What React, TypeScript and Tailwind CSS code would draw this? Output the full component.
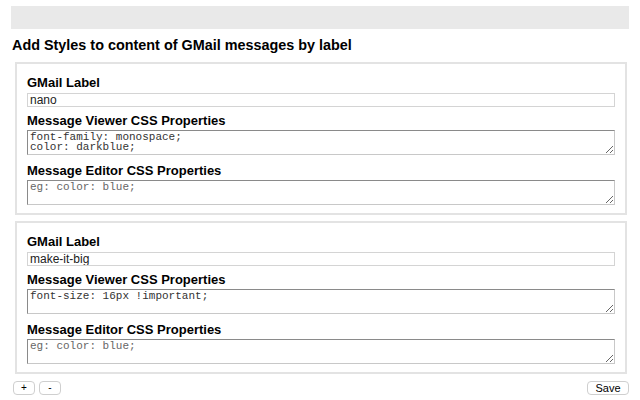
import { useState } from "react";

type Rule = { label: string; viewer: string; editor: string };

const initialRules: Rule[] = [
  { label: "nano", viewer: "font-family: monospace;\ncolor: darkblue;", editor: "" },
  { label: "make-it-big", viewer: "font-size: 16px !important;", editor: "" },
];

function RulePanel({ rule }: { rule: Rule }) {
  return (
    <div className="mt-[6px] first:mt-0 border-2 border-[#e3e3e3] px-[10px] pt-[11px] pb-[8px]">
      <div className="text-[13px] leading-[16px] font-bold text-black">GMail Label</div>
      <input
        defaultValue={rule.label}
        className="mt-[2px] block w-full h-[14px] border border-[#d4d4d4] px-[2px] text-[12px] leading-[12px] text-[#222] outline-none"
      />
      <div className="mt-[6px] text-[13px] leading-[16px] font-bold text-black">Message Viewer CSS Properties</div>
      <textarea
        defaultValue={rule.viewer}
        className="mt-[1px] block w-full h-[25px] border border-[#8a8a8a] border-b-[#c8c8c8] border-r-[#c8c8c8] px-[2px] py-[1px] text-[11px] leading-[10px] font-['Liberation_Mono',monospace] text-[#333] outline-none"
      />
      <div className="mt-[8px] text-[13px] leading-[16px] font-bold text-black">Message Editor CSS Properties</div>
      <textarea
        defaultValue={rule.editor}
        placeholder="eg: color: blue;"
        className="mt-[1px] block w-full h-[25px] border border-[#8a8a8a] border-b-[#c8c8c8] border-r-[#c8c8c8] px-[2px] py-[1px] text-[11px] leading-[10px] font-['Liberation_Mono',monospace] text-[#333] placeholder:text-[#666] outline-none"
      />
    </div>
  );
}

export default function App() {
  const [rules, setRules] = useState<Rule[]>(initialRules);

  return (
    <div className="w-[640px] h-[400px] bg-white font-['Liberation_Sans',Arial,sans-serif] overflow-hidden">
      <div className="mx-[11px] pt-[6px]">
        <div className="h-[23px] bg-[#e9e9e9]" />
      </div>
      <h1 className="ml-[12px] mt-[8px] text-[14.4px] leading-[17px] font-bold text-black">
        Add Styles to content of GMail messages by label
      </h1>
      <div className="ml-[15px] mr-[13px] mt-[8px]">
        {rules.map((r, i) => (
          <RulePanel key={i} rule={r} />
        ))}
      </div>
      <div className="flex items-center justify-between ml-[13px] mr-[11px] mt-[7px]">
        <div className="flex gap-[4px]">
          <button
            onClick={() => setRules([...rules, { label: "", viewer: "", editor: "" }])}
            className="w-[22px] h-[14px] rounded-[4px] border border-[#cfcfcf] bg-white text-[10px] leading-[12px] text-black"
          >
            +
          </button>
          <button
            onClick={() => setRules(rules.slice(0, -1))}
            className="w-[22px] h-[14px] rounded-[4px] border border-[#cfcfcf] bg-white text-[10px] leading-[12px] text-black"
          >
            -
          </button>
        </div>
        <button className="w-[42px] h-[14px] rounded-[4px] border border-[#cfcfcf] bg-white text-[11px] leading-[12px] text-black">
          Save
        </button>
      </div>
    </div>
  );
}
